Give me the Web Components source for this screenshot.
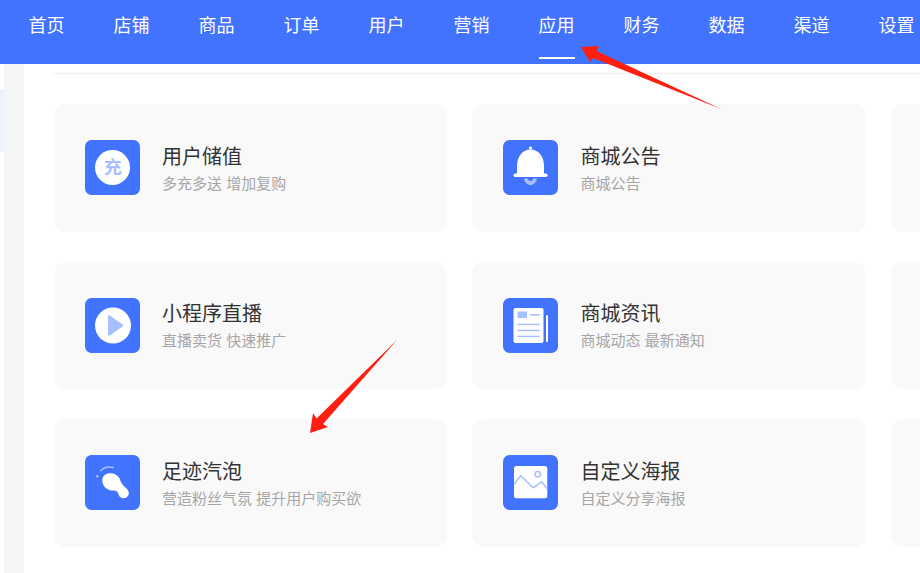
<!DOCTYPE html>
<html lang="zh-CN"><head><meta charset="utf-8"><title>应用</title>
<style>
html,body{margin:0;padding:0;height:573px;overflow:hidden;background:#fff;font-family:"Noto Sans CJK SC","Liberation Sans",sans-serif}
</style></head><body>
<app-shell>
  <top-nav slot="nav">
    <nav-item>首页</nav-item><nav-item>店铺</nav-item><nav-item>商品</nav-item><nav-item>订单</nav-item><nav-item>用户</nav-item><nav-item>营销</nav-item><nav-item active>应用</nav-item><nav-item>财务</nav-item><nav-item>数据</nav-item><nav-item>渠道</nav-item><nav-item>设置</nav-item>
  </top-nav>
  <app-card icon="charge" name="用户储值" desc="多充多送 增加复购"></app-card>
  <app-card icon="bell" name="商城公告" desc="商城公告"></app-card>
  <app-card></app-card>
  <app-card icon="play" name="小程序直播" desc="直播卖货 快速推广"></app-card>
  <app-card icon="news" name="商城资讯" desc="商城动态 最新通知"></app-card>
  <app-card></app-card>
  <app-card icon="foot" name="足迹汽泡" desc="营造粉丝气氛 提升用户购买欲"></app-card>
  <app-card icon="image" name="自定义海报" desc="自定义分享海报"></app-card>
  <app-card></app-card>
  <red-arrows slot="overlay"></red-arrows>
</app-shell>
<script>
const def=(name,html,init)=>customElements.define(name,class extends HTMLElement{
  constructor(){super();this.attachShadow({mode:'open'}).innerHTML=typeof html==='function'?html(this):html}
  connectedCallback(){if(init)init(this)}
});
def('app-shell',`<style>
:host{display:block;position:relative;width:920px;height:573px;overflow:hidden}
.body{display:flex;height:509px}
.rail{width:24px;flex:none;background:#f5f6f8;display:flex;flex-direction:column}
.strip{width:4px;flex:1;background:#fff}
.strip i{display:block;height:63px;margin-top:25px;background:#edf2ff}
.main{flex:1;min-width:0;background:#fff;border-bottom-left-radius:5px;padding:9px 0 0 30px;overflow:hidden}
.line{height:1px;background:#eeeeee;margin-bottom:30px}
.grid{display:grid;grid-template-columns:repeat(3,393.45px);grid-auto-rows:127.5px;gap:30px 25px;width:1230px}
</style>
<slot name="nav"></slot>
<div class="body">
  <div class="rail"><div class="strip"><i></i></div></div>
  <div class="main"><div class="line"></div><div class="grid"><slot></slot></div></div>
</div>
<slot name="overlay"></slot>`);
def('top-nav',`<style>
:host{display:flex;height:64px;box-sizing:border-box;background:#4273ff;padding-left:28.6px;gap:49px;align-items:flex-start;overflow:hidden}
</style><slot></slot>`);
def('nav-item',`<style>
:host{display:block;flex:none;box-sizing:border-box;height:59px;padding-top:12px;font-size:18px;line-height:24px;color:#fff;border-bottom:2px solid transparent;white-space:nowrap}
:host([active]){border-bottom-color:#fff}
</style><slot></slot>`);
const L='#a8bfff';
const icons={
charge:`<circle cx="27.5" cy="27.5" r="17.5" fill="#fff"/><text x="27.7" y="34" text-anchor="middle" font-size="18" font-weight="700" fill="${L}" font-family="Noto Sans CJK SC,sans-serif">充</text>`,
bell:`<circle cx="27.5" cy="8" r="1.6" fill="#fff"/><path d="M14 34V26C14 16 20 9.500 27.5 9.500S41 16 41 26V34Z" fill="#fff"/><rect x="10.5" y="33.5" width="34" height="3.4" rx="1.7" fill="#fff"/><path d="M21 38.500H24.500C25 40 26 41 27.500 41S30 40 30.500 38.500H34C33.500 42.500 30.500 45 27.500 45S21.500 42.500 21 38.500Z" fill="${L}"/>`,
play:`<circle cx="28" cy="27.500" r="18" fill="#fff"/><path d="M23 18.500C23 17.500 24 17 25 17.600L37.500 26.500C38.300 27.100 38.300 28 37.500 28.600L25 37.400C24 38 23 37.500 23 36.500Z" fill="${L}"/>`,
news:`<rect x="10.500" y="10" width="30" height="35" rx="2" fill="#fff"/><rect x="43" y="17" width="2" height="27" rx="1" fill="#fff"/><rect x="14.500" y="13.500" width="9.500" height="6.500" fill="${L}"/><rect x="27" y="16" width="9.500" height="1.600" fill="${L}"/><g fill="${L}"><rect x="14.500" y="25.700" width="22" height="1.500"/><rect x="14.500" y="31.700" width="22" height="1.500"/><rect x="14.500" y="37.700" width="22" height="1.500"/></g>`,
foot:`<path d="M17.300 25.500C17.300 20.500 21.500 18 26 18.300C31 18.600 34.500 22 35.500 26C36.500 29 39 31 41.500 33.500C44.500 36.500 44.500 40 42 42C39.500 44 35.500 43.500 34 40.500C33 38 32.500 36 30 35.500C24 36.300 17.300 32.500 17.300 25.500Z" fill="#fff"/><path d="M15.800 15.800C18 13 22.500 11.300 28.300 12.400" fill="none" stroke="${L}" stroke-width="1.500" stroke-linecap="round"/><circle cx="12.300" cy="21.300" r="1.300" fill="${L}"/>`,
image:`<rect x="11" y="11" width="33.300" height="32.300" rx="2.500" fill="#fff"/><circle cx="34.700" cy="19.300" r="2.700" fill="none" stroke="${L}" stroke-width="1.500"/><path d="M11 29.300L17.700 20.800L30.300 32.700L38.700 26.700L44.300 34" fill="none" stroke="${L}" stroke-width="1.500"/>`
};
def('app-icon',el=>`<style>
:host{display:block;width:55px;height:55px;flex:none}
svg{display:block}
</style><svg width="55" height="55" viewBox="0 0 55 55" aria-hidden="true"><rect width="55" height="55" rx="6.500" fill="#4273ff"/>${icons[el.getAttribute('name')]||''}</svg>`);
def('app-card',el=>{
 const n=el.getAttribute('name');
 return `<style>
:host{display:flex;align-items:center;gap:22px;box-sizing:border-box;padding:0 31px;background:#f9f9f9;border-radius:12px;min-width:0}
.t{display:flex;flex-direction:column;gap:5px;margin-top:1px}
.n{font-size:20px;line-height:24px;color:#333}
.d{font-size:15px;line-height:20px;color:#a6a6a6;word-spacing:1px;white-space:nowrap}
</style>${n?`<app-icon name="${el.getAttribute('icon')}"></app-icon><div class="t"><div class="n">${n}</div><div class="d">${el.getAttribute('desc')}</div></div>`:''}`;
});
def('red-arrows',`<style>
:host{position:absolute;left:0;top:0;display:block;pointer-events:none}
svg{display:block}
</style><svg width="920" height="573" viewBox="0 0 920 573" aria-hidden="true"><g fill="#ff1e10">
<polygon points="581,47 599,46 596.500,51 721,109 593,58 590,62"/>
<polygon points="397,340 323,424 328,427 310,433 313,413 316.500,418.500"/>
</g></svg>`);
</script>
</body></html>
